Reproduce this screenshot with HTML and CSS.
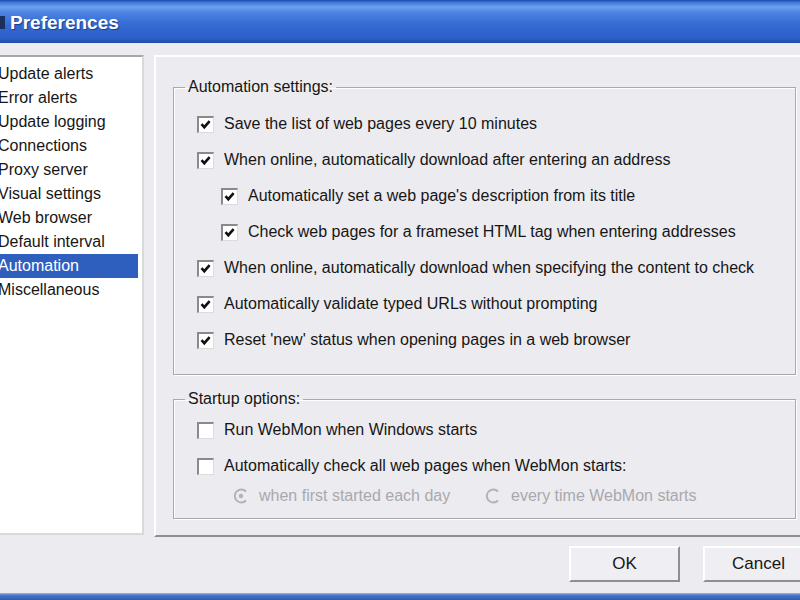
FILE: index.html
```html
<!DOCTYPE html>
<html lang="en">

<head>
    <meta charset="UTF-8">
    <meta name="viewport" content="width=device-width, initial-scale=1.0">
    <title>Preferences</title>
    <link rel="stylesheet" href="styles.css">
</head>

<body>
    <div class="window">
        <!-- Title bar -->
        <div class="titlebar">
            <span class="app-icon"></span>
            <span class="title">Preferences</span>
        </div>

        <div class="main">
            <!-- Category list -->
            <ul class="category-list">
                <li>Update alerts</li>
                <li>Error alerts</li>
                <li>Update logging</li>
                <li>Connections</li>
                <li>Proxy server</li>
                <li>Visual settings</li>
                <li>Web browser</li>
                <li>Default interval</li>
                <li class="selected">Automation</li>
                <li>Miscellaneous</li>
            </ul>

            <!-- Settings page -->
            <div class="panel">
                <fieldset class="group">
                    <legend>Automation settings:</legend>
                    <div class="row">
                        <span class="checkbox checked"><svg viewBox="0 0 17 17"><path d="M4.5 8.2 L7.3 11.2 L12.6 5.2" /></svg></span>
                        <span>Save the list of web pages every 10 minutes</span>
                    </div>
                    <div class="row">
                        <span class="checkbox checked"><svg viewBox="0 0 17 17"><path d="M4.5 8.2 L7.3 11.2 L12.6 5.2" /></svg></span>
                        <span>When online, automatically download after entering an address</span>
                    </div>
                    <div class="row indent">
                        <span class="checkbox checked"><svg viewBox="0 0 17 17"><path d="M4.5 8.2 L7.3 11.2 L12.6 5.2" /></svg></span>
                        <span>Automatically set a web page's description from its title</span>
                    </div>
                    <div class="row indent">
                        <span class="checkbox checked"><svg viewBox="0 0 17 17"><path d="M4.5 8.2 L7.3 11.2 L12.6 5.2" /></svg></span>
                        <span>Check web pages for a frameset HTML tag when entering addresses</span>
                    </div>
                    <div class="row">
                        <span class="checkbox checked"><svg viewBox="0 0 17 17"><path d="M4.5 8.2 L7.3 11.2 L12.6 5.2" /></svg></span>
                        <span>When online, automatically download when specifying the content to check</span>
                    </div>
                    <div class="row">
                        <span class="checkbox checked"><svg viewBox="0 0 17 17"><path d="M4.5 8.2 L7.3 11.2 L12.6 5.2" /></svg></span>
                        <span>Automatically validate typed URLs without prompting</span>
                    </div>
                    <div class="row">
                        <span class="checkbox checked"><svg viewBox="0 0 17 17"><path d="M4.5 8.2 L7.3 11.2 L12.6 5.2" /></svg></span>
                        <span>Reset 'new' status when opening pages in a web browser</span>
                    </div>
                </fieldset>

                <fieldset class="group startup">
                    <legend>Startup options:</legend>
                    <div class="row">
                        <span class="checkbox"></span>
                        <span>Run WebMon when Windows starts</span>
                    </div>
                    <div class="row">
                        <span class="checkbox"></span>
                        <span>Automatically check all web pages when WebMon starts:</span>
                    </div>
                    <div class="radio-row">
                        <span class="radio-option first">
                            <svg class="radio" viewBox="0 0 16 16">
                                <path class="ring-dark" d="M13 3.5 A6.5 6.5 0 1 0 13 12.5" />
                                <circle class="dot" cx="8" cy="8" r="2.2" />
                            </svg>
                            when first started each day
                        </span>
                        <span class="radio-option">
                            <svg class="radio" viewBox="0 0 16 16">
                                <path class="ring-dark" d="M13 3.5 A6.5 6.5 0 1 0 13 12.5" />
                            </svg>
                            every time WebMon starts
                        </span>
                    </div>
                </fieldset>
            </div>
        </div>

        <!-- Dialog buttons -->
        <div class="buttons">
            <button type="button">OK</button>
            <button type="button">Cancel</button>
        </div>

        <div class="frame-bottom"></div>
    </div>
</body>

</html>
```

FILE: styles.css
```css
/* Windows XP style preferences dialog */
body {
    margin: 0;
    width: 800px;
    height: 600px;
    overflow: hidden;
    background-color: #ecebef;
    font-family: "Liberation Sans", Arial, sans-serif;
    font-size: 16px;
    color: #161616;
}

.window {
    display: flex;
    flex-direction: column;
    height: 600px;
}

.titlebar {
    height: 43px;
    box-sizing: border-box;
    display: flex;
    align-items: center;
    background: linear-gradient(to bottom, #1d4aa6 0%, #3f7ade 6%, #6ea2ee 16%, #4a82e0 30%, #3469d2 60%, #2c5ec8 90%, #1f4aa8 100%);
}

.app-icon {
    width: 5px;
    height: 13px;
    margin-top: 2px;
    background-color: #1b2f5c;
}

.title {
    margin-left: 5px;
    margin-top: 3px;
    font-size: 19px;
    font-weight: bold;
    color: #ffffff;
    text-shadow: 1px 1px 1px #1a3d8c;
}

.main {
    display: flex;
    padding-top: 12px;
}

.category-list {
    list-style: none;
    margin: 0 0 0 -10px;
    padding: 5px 4px 0 0;
    width: 154px;
    height: 480px;
    box-sizing: border-box;
    background-color: #ffffff;
    border-top: 2px solid #a7a7a9;
    border-left: 2px solid #a7a7a9;
    border-right: 2px solid #d9d8dc;
    border-bottom: 2px solid #d9d8dc;
    flex-shrink: 0;
}

.category-list li {
    height: 24px;
    line-height: 24px;
    padding-left: 6px;
    white-space: nowrap;
}

.category-list li.selected {
    background-color: #2e5fbf;
    color: #ffffff;
}

.panel {
    margin-left: 10px;
    width: 662px;
    height: 482px;
    box-sizing: border-box;
    padding: 21px 0 0 17px;
    border-top: 2px solid #ffffff;
    border-left: 2px solid #ffffff;
    border-right: 2px solid #8f8e93;
    border-bottom: 2px solid #8f8e93;
    margin-right: -20px;
    flex-shrink: 0;
}

.group {
    margin: 0;
    width: 623px;
    box-sizing: border-box;
    padding: 10px 0 16px 23px;
    border: 1px solid #a9a8ad;
    box-shadow: 1px 1px 0 #ffffff, inset 1px 1px 0 #ffffff;
}

.group legend {
    margin-left: -12px;
    padding: 0 3px;
    line-height: 18px;
}

.group.startup {
    margin-top: 15px;
    padding-top: 4px;
    padding-bottom: 10px;
}

.row {
    display: flex;
    align-items: center;
    height: 36px;
    white-space: nowrap;
}

.row.indent {
    padding-left: 24px;
}

.checkbox {
    width: 17px;
    height: 17px;
    box-sizing: border-box;
    margin-right: 10px;
    background-color: #ffffff;
    border-top: 2px solid #8a898e;
    border-left: 2px solid #8a898e;
    border-right: 1px solid #dcdbe0;
    border-bottom: 1px solid #dcdbe0;
    flex-shrink: 0;
}

.checkbox svg {
    display: block;
    width: 17px;
    height: 17px;
    margin: -2px 0 0 -2px;
}

.checkbox path {
    fill: none;
    stroke: #111111;
    stroke-width: 2.6;
}

.radio-row {
    display: flex;
    align-items: center;
    height: 24px;
    padding-left: 36px;
    color: #a9a8ad;
    white-space: nowrap;
}

.radio-option {
    display: flex;
    align-items: center;
}

.radio-option.first {
    width: 252px;
}

.radio {
    width: 16px;
    height: 16px;
    margin-right: 10px;
}

.ring-dark {
    fill: none;
    stroke: #b3b2b7;
    stroke-width: 2;
}

.dot {
    fill: #b3b2b7;
}

.buttons {
    display: flex;
    justify-content: flex-end;
    gap: 23px;
    padding-top: 9px;
    margin-right: -14px;
}

.buttons button {
    width: 111px;
    height: 36px;
    font-family: "Liberation Sans", Arial, sans-serif;
    font-size: 17px;
    color: #161616;
    background-color: #efeef2;
    border-top: 2px solid #ffffff;
    border-left: 2px solid #ffffff;
    border-right: 2px solid #8f8e93;
    border-bottom: 2px solid #8f8e93;
    padding: 0;
}

.frame-bottom {
    margin-top: auto;
    height: 7px;
    background: linear-gradient(to bottom, #9fbce8 0%, #4a78c8 30%, #2c5cb8 100%);
}
```
